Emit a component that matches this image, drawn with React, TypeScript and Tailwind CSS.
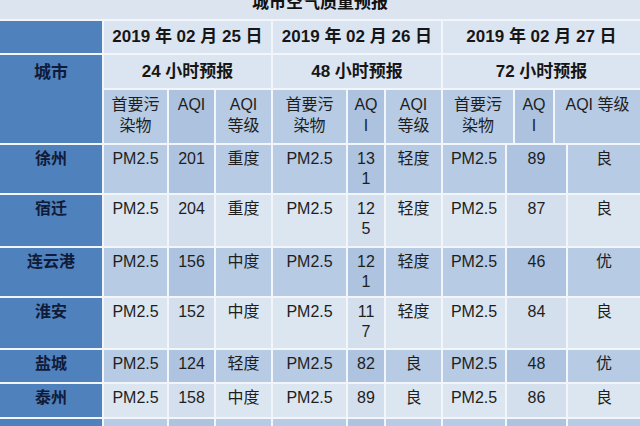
import type { ReactNode } from 'react';

type Row = {
  city: string;
  tone: 'mid' | 'light';
  d1: [string, string, string];
  d2: [string, ReactNode, string];
  d3: [string, string, string];
};

const rows: Row[] = [
  { city: '徐州', tone: 'mid', d1: ['PM2.5', '201', '重度'], d2: ['PM2.5', <>13<br />1</>, '轻度'], d3: ['PM2.5', '89', '良'] },
  { city: '宿迁', tone: 'light', d1: ['PM2.5', '204', '重度'], d2: ['PM2.5', <>12<br />5</>, '轻度'], d3: ['PM2.5', '87', '良'] },
  { city: '连云港', tone: 'mid', d1: ['PM2.5', '156', '中度'], d2: ['PM2.5', <>12<br />1</>, '轻度'], d3: ['PM2.5', '46', '优'] },
  { city: '淮安', tone: 'light', d1: ['PM2.5', '152', '中度'], d2: ['PM2.5', <>11<br />7</>, '轻度'], d3: ['PM2.5', '84', '良'] },
  { city: '盐城', tone: 'mid', d1: ['PM2.5', '124', '轻度'], d2: ['PM2.5', '82', '良'], d3: ['PM2.5', '48', '优'] },
  { city: '泰州', tone: 'light', d1: ['PM2.5', '158', '中度'], d2: ['PM2.5', '89', '良'], d3: ['PM2.5', '86', '良'] },
  // next row only peeks in at the bottom edge, its text is below the fold
  { city: '', tone: 'mid', d1: ['', '', ''], d2: ['', '', ''], d3: ['', '', ''] },
];

function Head({ children, className = '' }: { children: ReactNode; className?: string }) {
  return (
    <div className={`flex items-center justify-center bg-[#dbe5f1] text-[17px] font-bold text-[#161616] ${className}`}>
      {children}
    </div>
  );
}

function Sub({ children, dark, className = '' }: { children: ReactNode; dark?: boolean; className?: string }) {
  return (
    <div
      className={`pt-[4px] text-center text-[16px] leading-[21px] text-[#1e1e1e] ${
        dark ? 'bg-[#acc2de]' : 'bg-[#b7cbe4]'
      } ${className}`}
    >
      {children}
    </div>
  );
}

function Cell({ children, tone, dark, className = '' }: { children: ReactNode; tone: 'mid' | 'light'; dark?: boolean; className?: string }) {
  let bg = tone === 'mid' ? 'bg-[#b7cbe4]' : 'bg-[#dce6f1]';
  if (dark) bg = tone === 'mid' ? 'bg-[#adc3e0]' : 'bg-[#d4dfee]';
  return <div className={`pt-[4px] text-center text-[16px] leading-[20px] text-[#1e1e1e] ${bg} ${className}`}>{children}</div>;
}

export default function App() {
  return (
    <div className="flex h-[426px] w-[640px] flex-col gap-[2px] overflow-hidden bg-[#f2f5f9] font-['Liberation_Sans','Noto_Sans_CJK_SC',sans-serif]">
      {/* title, cut off at the top */}
      <div className="h-[19px] shrink-0 overflow-hidden bg-[#dbe4ef] text-center">
        <div className="-mt-[7px] text-[17px] font-bold leading-[20px] text-[#111]">城市空气质量预报</div>
      </div>

      <div className="grid grid-cols-[102px_63px_45px_55px_73px_36px_55px_62px_6px_38px_11px_72px] grid-rows-[32px_33px_53px_48px_51px_48px_50px_32px_33px_48px] gap-[2px]">
        {/* date row */}
        <div className="bg-[#4f81bd]" />
        <Head className="col-span-3">2019 年 02 月 25 日</Head>
        <Head className="col-span-3">2019 年 02 月 26 日</Head>
        <Head className="col-span-5">2019 年 02 月 27 日</Head>

        {/* forecast row */}
        <div className="row-span-2 bg-[#4f81bd] pt-[8px] text-center text-[17px] font-bold leading-[20px] text-[#0f1b38]">城市</div>
        <Head className="col-span-3">24 小时预报</Head>
        <Head className="col-span-3">48 小时预报</Head>
        <Head className="col-span-5">72 小时预报</Head>

        {/* sub headers */}
        <Sub>首要污<br />染物</Sub>
        <Sub dark>AQI</Sub>
        <Sub>AQI<br />等级</Sub>
        <Sub>首要污<br />染物</Sub>
        <Sub dark>AQ<br />I</Sub>
        <Sub>AQI<br />等级</Sub>
        <Sub className="col-span-2">首要污<br />染物</Sub>
        <Sub dark>AQ<br />I</Sub>
        <Sub className="col-span-2">AQI 等级</Sub>

        {rows.map((r, i) => (
          <Row key={i} r={r} />
        ))}
      </div>
    </div>
  );
}

function Row({ r }: { r: Row }) {
  return (
    <>
      <div className="bg-[#4f81bd] pt-[4px] text-center text-[16px] font-bold leading-[20px] text-[#0f1b38]">{r.city}</div>
      <Cell tone={r.tone}>{r.d1[0]}</Cell>
      <Cell tone={r.tone} dark>{r.d1[1]}</Cell>
      <Cell tone={r.tone}>{r.d1[2]}</Cell>
      <Cell tone={r.tone}>{r.d2[0]}</Cell>
      <Cell tone={r.tone} dark>{r.d2[1]}</Cell>
      <Cell tone={r.tone}>{r.d2[2]}</Cell>
      <Cell tone={r.tone}>{r.d3[0]}</Cell>
      <Cell tone={r.tone} dark className="col-span-3">{r.d3[1]}</Cell>
      <Cell tone={r.tone}>{r.d3[2]}</Cell>
    </>
  );
}
